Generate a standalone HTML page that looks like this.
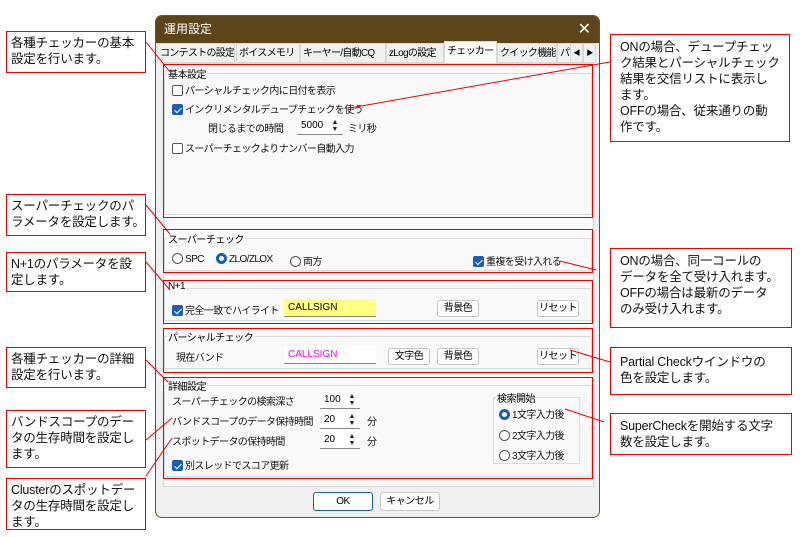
<!DOCTYPE html>
<html><head><meta charset="utf-8"><style>
*{margin:0;padding:0;box-sizing:border-box}
body{width:800px;height:537px;background:#fff;position:relative;overflow:hidden;font-family:"Liberation Sans","Noto Sans CJK JP",sans-serif;}
.a{position:absolute}
.call{position:absolute;border:1.5px solid #e00;background:#fff;font-size:12.5px;line-height:16px;padding:3px 4px;color:#111;white-space:nowrap;letter-spacing:-0.2px}
.dlg{position:absolute;left:155px;top:15px;width:445px;height:503px;background:#f0f0f0;border:1px solid #6b5230;border-radius:7px;overflow:hidden}
.tb{position:absolute;left:0;top:0;width:100%;height:27px;background:#5e4419;color:#fff;font-size:12px;line-height:27px;padding-left:8px}
.d{font-size:10px;color:#111;white-space:nowrap;letter-spacing:-0.6px}
.tab{position:absolute;top:27px;height:20px;font-size:10px;letter-spacing:-0.7px;line-height:19px;border:1px solid #d8d8d8;background:#f0f0f0;padding:0 2px;white-space:nowrap;overflow:hidden}
.grp{position:absolute;border:1px solid #dcdcdc;}
.lg{position:absolute;font-size:10px;letter-spacing:-0.5px;background:#f9f9f9;padding:0 1px;top:-8px;left:2px;white-space:nowrap}
.cb{display:inline-block;width:11px;height:11px;border:1px solid #555;border-radius:2px;vertical-align:-2px;margin-right:2px;background:#fff}
.cb.on{background:#1a5fb4;border-color:#1a5fb4;position:relative}
.cb.on:after{content:"";position:absolute;left:3px;top:1px;width:3px;height:6px;border:solid #fff;border-width:0 1px 1px 0;transform:rotate(45deg)}
.rb{display:inline-block;width:11px;height:11px;border:1px solid #555;border-radius:50%;vertical-align:-2px;margin-right:2px;background:#fff}
.rb.on{border:3px solid #1a5fb4}
.btn{position:absolute;height:17px;border:1px solid #c8c8c8;border-radius:3px;background:#fdfdfd;font-size:10px;letter-spacing:-0.5px;text-align:center;line-height:15px;white-space:nowrap}
.ed{position:absolute;height:18px;background:#fff;border-bottom:1px solid #888;font-size:10px;line-height:17px;padding-left:4px}
.sp{position:absolute;width:10px;height:14px;font-size:7px;line-height:7px;text-align:center;color:#222}
.red{position:absolute;border:1.5px solid #e00}
</style></head><body>

<div class="dlg">
 <div class="tb">運用設定<span style="position:absolute;right:8px;top:0;font-size:16px">✕</span></div>
 <div class="tab" style="left:1px;width:78px">コンテストの設定</div>
 <div class="tab" style="left:80px;width:64px">ボイスメモリ</div>
 <div class="tab" style="left:144px;width:86px">キーヤー/自動CQ</div>
 <div class="tab" style="left:230px;width:58px">zLogの設定</div>
 <div class="tab" style="left:288px;width:53px;background:#f9f9f9;border-bottom-color:#f9f9f9;top:25px;height:23px">チェッカー</div>
 <div class="tab" style="left:341px;width:60px">クイック機能</div>
 <div class="tab" style="left:401px;width:14px">パ</div>
 <div class="tab" style="left:414px;width:13px;font-size:7px;text-align:center">◀</div>
 <div class="tab" style="left:427px;width:13px;font-size:7px;text-align:center">▶</div>
 <div class="a" style="left:7px;top:47px;width:431px;height:424px;background:#f9f9f9;border:1px solid #d8d8d8"></div>
</div>

<div class="grp" style="left:164px;top:73px;width:428px;height:142px"><span class="lg">基本設定</span></div>
<div class="a d" style="left:172px;top:82px"><span class="cb"></span>パーシャルチェック内に日付を表示</div>
<div class="a d" style="left:172px;top:101px"><span class="cb on"></span>インクリメンタルデュープチェックを使う</div>
<div class="a d" style="left:208px;top:120px">閉じるまでの時間</div>
<div class="ed" style="left:297px;top:117px;width:46px">5000</div>
<div class="sp" style="left:330px;top:119px">▲<br>▼</div>
<div class="a d" style="left:348px;top:120px">ミリ秒</div>
<div class="a d" style="left:172px;top:140px"><span class="cb"></span>スーパーチェックよりナンバー自動入力</div>

<div class="grp" style="left:164px;top:238px;width:428px;height:33px"><span class="lg">スーパーチェック</span></div>
<div class="a d" style="left:172px;top:253px"><span class="rb"></span>SPC</div>
<div class="a d" style="left:216px;top:253px"><span class="rb on"></span>ZLO/ZLOX</div>
<div class="a d" style="left:290px;top:253px"><span class="rb"></span>両方</div>
<div class="a d" style="left:473px;top:253px"><span class="cb on"></span>重複を受け入れる</div>

<div class="grp" style="left:164px;top:288px;width:428px;height:33px"><span class="lg">N+1</span></div>
<div class="a d" style="left:172px;top:302px"><span class="cb on"></span>完全一致でハイライト</div>
<div class="ed" style="left:284px;top:299px;width:92px;background:#ffff80">CALLSIGN</div>
<div class="btn" style="left:437px;top:300px;width:42px">背景色</div>
<div class="btn" style="left:537px;top:300px;width:42px">リセット</div>

<div class="grp" style="left:164px;top:336px;width:428px;height:33px"><span class="lg">パーシャルチェック</span></div>
<div class="a d" style="left:176px;top:349px">現在バンド</div>
<div class="ed" style="left:284px;top:346px;width:92px;color:#f0f">CALLSIGN</div>
<div class="btn" style="left:388px;top:348px;width:42px">文字色</div>
<div class="btn" style="left:437px;top:348px;width:42px">背景色</div>
<div class="btn" style="left:537px;top:348px;width:42px">リセット</div>

<div class="grp" style="left:164px;top:385px;width:428px;height:92px"><span class="lg">詳細設定</span></div>
<div class="a d" style="left:172px;top:393px">スーパーチェックの検索深さ</div>
<div class="ed" style="left:320px;top:391px;width:40px">100</div>
<div class="sp" style="left:347px;top:393px">▲<br>▼</div>
<div class="a d" style="left:172px;top:413px">バンドスコープのデータ保持時間</div>
<div class="ed" style="left:320px;top:411px;width:40px">20</div>
<div class="sp" style="left:347px;top:413px">▲<br>▼</div>
<div class="a d" style="left:367px;top:413px">分</div>
<div class="a d" style="left:172px;top:433px">スポットデータの保持時間</div>
<div class="ed" style="left:320px;top:431px;width:40px">20</div>
<div class="sp" style="left:347px;top:433px">▲<br>▼</div>
<div class="a d" style="left:367px;top:433px">分</div>
<div class="a d" style="left:172px;top:457px"><span class="cb on"></span>別スレッドでスコア更新</div>
<div class="grp" style="left:493px;top:397px;width:87px;height:67px"><span class="lg" style="background:#f9f9f9">検索開始</span></div>
<div class="a d" style="left:499px;top:406px"><span class="rb on"></span>1文字入力後</div>
<div class="a d" style="left:499px;top:427px"><span class="rb"></span>2文字入力後</div>
<div class="a d" style="left:499px;top:447px"><span class="rb"></span>3文字入力後</div>

<div class="btn" style="left:313px;top:492px;width:60px;height:19px;border-color:#1a5fb4;line-height:17px">OK</div>
<div class="btn" style="left:380px;top:492px;width:60px;height:19px;line-height:17px">キャンセル</div>

<div class="red" style="left:163px;top:64px;width:430px;height:154px"></div>
<div class="red" style="left:163px;top:229px;width:430px;height:44px"></div>
<div class="red" style="left:163px;top:280px;width:430px;height:44px"></div>
<div class="red" style="left:163px;top:328px;width:430px;height:45px"></div>
<div class="red" style="left:163px;top:377px;width:430px;height:102px"></div>

<svg class="a" style="left:0;top:0" width="800" height="537"><g stroke="#e00" stroke-width="1">
<line x1="146" y1="42" x2="170" y2="72"/>
<line x1="350" y1="108" x2="610" y2="62"/>
<line x1="146" y1="205" x2="170" y2="234"/>
<line x1="146" y1="262" x2="170" y2="290"/>
<line x1="146" y1="360" x2="168" y2="382"/>
<line x1="560" y1="261" x2="596" y2="270"/>
<line x1="570" y1="350" x2="610" y2="362"/>
<line x1="565" y1="409" x2="604" y2="422"/>
<line x1="146" y1="440" x2="172" y2="418"/>
<line x1="146" y1="476" x2="172" y2="438"/>
</g></svg>

<div class="call" style="left:6px;top:31px;width:140px;height:42px">各種チェッカーの基本<br>設定を行います。</div>
<div class="call" style="left:6px;top:194px;width:140px;height:42px">スーパーチェックのパ<br>ラメータを設定します。</div>
<div class="call" style="left:6px;top:252px;width:140px;height:40px">N+1のパラメータを設<br>定します。</div>
<div class="call" style="left:6px;top:347px;width:140px;height:41px">各種チェッカーの詳細<br>設定を行います。</div>
<div class="call" style="left:6px;top:410px;width:140px;height:58px">バンドスコープのデー<br>タの生存時間を設定し<br>ます。</div>
<div class="call" style="left:6px;top:478px;width:140px;height:52px">Clusterのスポットデー<br>タの生存時間を設定し<br>ます。</div>
<div class="call" style="left:610px;top:34px;width:180px;height:108px;padding:4px 9px">ONの場合、デュープチェッ<br>ク結果とパーシャルチェック<br>結果を交信リストに表示し<br>ます。<br>OFFの場合、従来通りの動<br>作です。</div>
<div class="call" style="left:610px;top:248px;width:182px;height:80px;padding:4px 9px">ONの場合、同一コールの<br>データを全て受け入れます。<br>OFFの場合は最新のデータ<br>のみ受け入れます。</div>
<div class="call" style="left:610px;top:347px;width:182px;height:48px;padding:6px 9px">Partial Checkウインドウの<br>色を設定します。</div>
<div class="call" style="left:610px;top:413px;width:182px;height:42px;padding:4px 9px">SuperCheckを開始する文字<br>数を設定します。</div>
</body></html>
